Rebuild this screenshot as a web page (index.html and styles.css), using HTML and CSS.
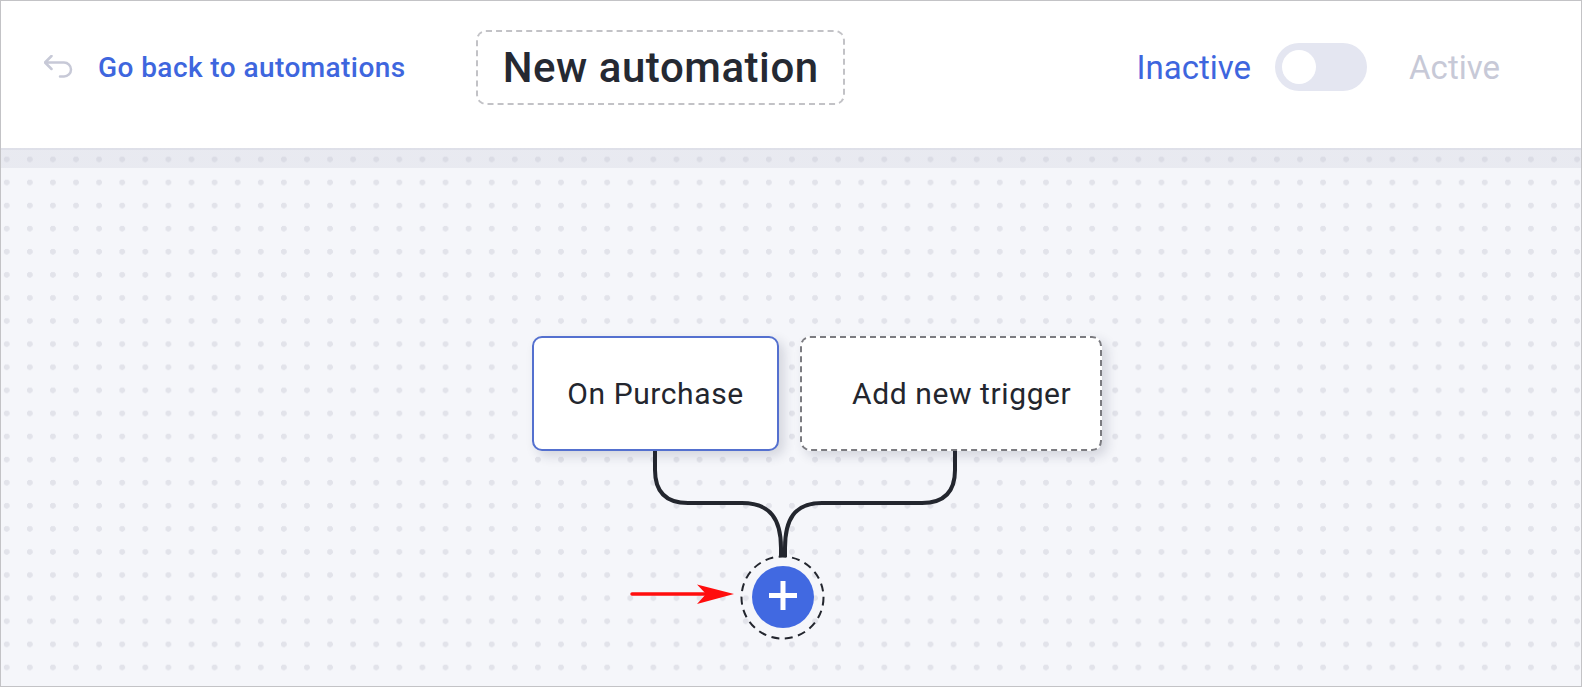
FILE: index.html
```html
<!DOCTYPE html>
<html lang="en">
<head>
    <meta charset="UTF-8">
    <title>New automation</title>
    <meta name="viewport" content="width=device-width, initial-scale=1.0">
    <link rel="stylesheet" href="styles.css">
</head>
<body>
    <div class="frame">
        <header class="topbar">
            <a class="back" href="#">
                <svg class="back-icon" width="30" height="24" viewBox="0 0 30 24">
                    <path d="M7.5 1 L1 7.5 L7.5 14 M1 7.5 H20 A7 7 0 0 1 20 21.5 H16" />
                </svg>
                <span>Go back to automations</span>
            </a>

            <div class="title">New automation</div>

            <div class="status">
                <span class="status-off">Inactive</span>
                <span class="switch"><span class="knob"></span></span>
                <span class="status-on">Active</span>
            </div>
        </header>

        <main class="canvas">
            <!-- connectors are drawn in page coordinates -->
            <svg class="wires" width="1580" height="538" viewBox="1 148 1580 538">
                <path d="M655 450 V470 Q655 503 688 503 H742 C771 503 781 520 781 548 V557" />
                <path d="M955 450 V470 Q955 503 922 503 H822 C794 503 785 520 785 548 V557" />
                <circle class="ring" cx="782.5" cy="597.5" r="41" />
                <path class="pointer-line" d="M632 594 H708" />
                <path class="pointer-head" d="M734 594 L697 584.5 L706 594 L697 604 Z" />
            </svg>

            <div class="node node-trigger">On Purchase</div>
            <div class="node node-new">Add new trigger</div>

            <button class="add-btn" type="button">
                <svg width="30" height="31" viewBox="0 0 30 31">
                    <path d="M15 1 V30 M1 15.5 H29" />
                </svg>
            </button>
        </main>
    </div>
</body>
</html>
```

FILE: styles.css
```css
:root {
    --blue: #3e66de;
    --muted: #c7c9d7;
    --ink: #23262e;
    --canvas: #f5f6fa;
    --dot: #e2e3ea;
}

* {
    box-sizing: border-box;
}

body {
    margin: 0;
    font-family: Roboto, 'Noto Sans', sans-serif;
    color: var(--ink);
    background: #fff;
}

.frame {
    height: 687px;
    border: 1px solid #c3c3c6;
    display: flex;
    flex-direction: column;
    overflow: hidden;
}

/* top bar */

.topbar {
    height: 147px;
    flex: none;
    display: flex;
    align-items: center;
    padding: 0 81px 15px 43px;
    background: #fff;
}

.back {
    display: flex;
    align-items: center;
    gap: 24px;
    color: var(--blue);
    text-decoration: none;
    font-size: 28px;
    font-weight: 500;
    letter-spacing: 0.43px;
}

.back-icon path {
    fill: none;
    stroke: var(--muted);
    stroke-width: 2.5;
    stroke-linecap: round;
    stroke-linejoin: round;
}

.title {
    margin-left: 70px;
    height: 75px;
    display: flex;
    align-items: center;
    padding: 0 24px 0 25px;
    border: 2px dashed #c2c2c6;
    border-radius: 10px;
    font-size: 42px;
    font-weight: 500;
    letter-spacing: 0.55px;
    color: #252932;
}

.status {
    margin-left: auto;
    display: flex;
    align-items: center;
    font-size: 33px;
}

.status-off {
    color: var(--blue);
}

.status-on {
    color: var(--muted);
    margin-left: 42px;
}

.switch {
    margin-left: 24px;
    width: 92px;
    height: 48px;
    border-radius: 24px;
    background: #e4e6f1;
    display: flex;
    align-items: center;
    padding-left: 7px;
}

.knob {
    width: 34px;
    height: 34px;
    border-radius: 50%;
    background: #fff;
}

/* canvas */

.canvas {
    position: relative;
    flex: 1;
    background:
        linear-gradient(rgba(200, 202, 216, 0.5) 0 2px, rgba(200, 202, 216, 0.28) 2px 20px, transparent 20px) 0 0 / 100% 20px no-repeat,
        radial-gradient(circle at 5.7px 11.3px, var(--dot) 2.6px, transparent 3.2px) 0 0 / 23.1px 23.1px,
        var(--canvas);
}

.wires {
    position: absolute;
    left: 0;
    top: 0;
}

.wires path {
    fill: none;
    stroke: var(--ink);
    stroke-width: 4;
}

.wires .ring {
    fill: none;
    stroke: var(--ink);
    stroke-width: 2;
    stroke-dasharray: 8 5.5;
}

.wires .pointer-line {
    stroke: #ff0d0d;
    stroke-width: 3.5;
    stroke-linecap: round;
}

.wires .pointer-head {
    fill: #ff0d0d;
    stroke: none;
}

.node {
    position: absolute;
    top: 188px;
    height: 115px;
    display: flex;
    align-items: center;
    background: #fff;
    border-radius: 10px;
    font-size: 30px;
    letter-spacing: 0.6px;
    color: var(--ink);
    box-shadow: 5px 5px 12px rgba(30, 35, 70, 0.16);
}

.node-trigger {
    left: 531px;
    width: 247px;
    justify-content: center;
    border: 2px solid #5470cf;
}

.node-new {
    left: 799px;
    width: 302px;
    padding-left: 50px;
    border: 2px dashed #7b7b80;
}

.add-btn {
    position: absolute;
    left: 751px;
    top: 418px;
    width: 62px;
    height: 62px;
    padding: 0;
    border: none;
    border-radius: 50%;
    background: #4169e1;
    display: flex;
    align-items: center;
    justify-content: center;
    cursor: pointer;
}

.add-btn svg {
    margin-top: -3px;
}

.add-btn path {
    stroke: #fff;
    stroke-width: 5;
    fill: none;
}
```
